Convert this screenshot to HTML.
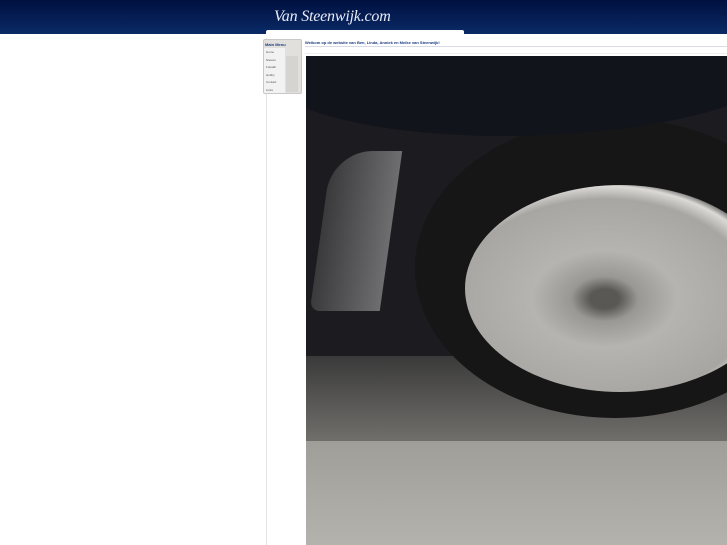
<!DOCTYPE html>
<html><head><meta charset="utf-8"><style>
*{margin:0;padding:0;box-sizing:border-box}
body{width:727px;height:545px;overflow:hidden;background:#fff;font-family:"Liberation Sans",sans-serif;position:relative}
.hdr{position:absolute;left:0;top:0;width:727px;height:34px;background:linear-gradient(#001040,#0a2a66)}
.logo{position:absolute;left:274px;top:8px;color:#e8ecf8;font-family:"Liberation Serif",serif;font-style:italic;font-size:16px;letter-spacing:-0.2px}
.search{position:absolute;left:266px;top:30px;width:198px;height:8px;background:#fff;border-radius:2px}
.vline{position:absolute;left:266px;top:38px;width:1px;height:507px;background:#e4e4e4}
.menu{position:absolute;left:263px;top:39px;width:39px;height:55px;background:#e2e0dc;border:1px solid #c8c8c8;border-radius:2px}
.menu .t{font-size:4px;font-weight:bold;color:#1a3a80;padding:2px 1px;height:8px}
.menu .i{font-size:3px;color:#555;height:7.5px;padding:2px 2px;background:#f2f2f2;width:21px}
.menu .i:first-of-type{background:#fff;width:37px}
.menu .strip{position:absolute;left:22px;top:16px;width:12px;height:36px;background:#d6d4d0}
.title{position:absolute;left:305px;top:40px;font-size:4px;font-weight:bold;color:#1a3a80}
.hl{position:absolute;left:305px;top:46px;width:422px;height:1px;background:#d8dbe4}
.hl2{position:absolute;left:305px;top:53px;width:422px;height:1px;background:#eee}
.photo{position:absolute;left:306px;top:56px;width:421px;height:489px;overflow:hidden;background:#1c1c20}
.asph{position:absolute;left:0;top:300px;width:421px;height:100px;background:linear-gradient(#3a3a3a,#7a7874)}
.curb{position:absolute;left:0;top:385px;width:421px;height:104px;background:linear-gradient(#a09e98,#b4b2ac)}
.tire{position:absolute;left:109px;top:62px;width:400px;height:300px;border-radius:50%;background:#161616}
.rim{position:absolute;left:159px;top:129px;width:310px;height:207px;border-radius:50%;background:radial-gradient(ellipse at 45% 55%,#5a5854 6%,#9a9894 14%,#b6b4b0 30%,#a8a6a2 62%,#dcdad6 70%,#666 74%)}
.fender{position:absolute;left:-40px;top:-60px;width:520px;height:140px;background:#12141c;border-radius:0 0 55% 45%}
.lip{position:absolute;left:15px;top:95px;width:70px;height:160px;background:linear-gradient(90deg,#3a3a3c,#6e6e70);border-radius:40px 0 0 10px;transform:skewX(-8deg)}
</style></head><body>
<div class="hdr"></div><div class="logo">Van Steenwijk.com</div>
<div class="search"></div>
<div class="vline"></div>
<div class="menu"><div class="strip"></div><div class="t">Main Menu</div>
<div class="i">Home</div><div class="i">Nieuws</div><div class="i">Fotoalb</div><div class="i">Hobby</div><div class="i">Contact</div><div class="i">Links</div></div>
<div class="title">Welkom op de website van Ben, Linda, Anniek en Meike van Steenwijk!</div>
<div class="hl"></div><div class="hl2"></div>
<div class="photo"><div class="asph"></div><div class="curb"></div><div class="lip"></div><div class="tire"></div><div class="rim"></div><div class="fender"></div></div>
</body></html>
